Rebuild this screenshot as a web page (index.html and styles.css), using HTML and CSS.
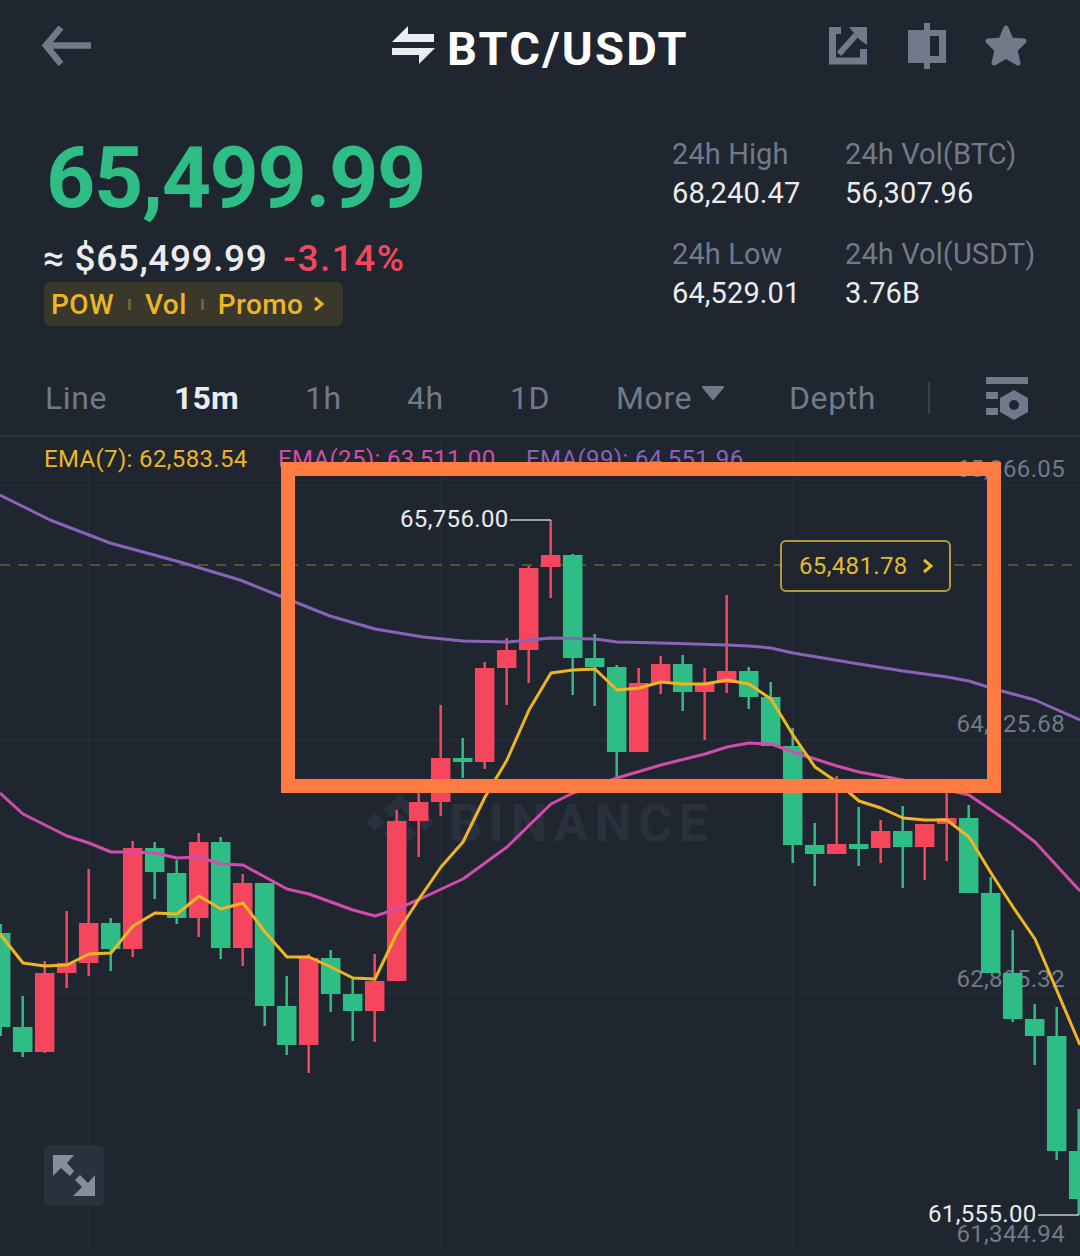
FILE: index.html
```html
<!DOCTYPE html>
<html lang="en">
<head>
<meta charset="UTF-8" />
<title>BTC/USDT</title>
<link rel="stylesheet" href="styles.css">
</head>
<body>

<!-- Top bar -->
<header class="top-bar">
  <svg class="back-icon" width="50" height="40" viewBox="0 0 50 40"><path d="M50 19.500H6M20 1.500L5 19.500L20 38" /></svg>
  <div class="pair">
    <svg class="swap-icon" width="44" height="40" viewBox="0 0 44 40"><path d="M16 0L0 16H42V8H16ZM0 22H43L27 38V29H0Z" /></svg>
    <span class="pair-name">BTC/USDT</span>
  </div>
  <div class="top-actions">
    <svg width="38" height="38" viewBox="0 0 38 38"><path class="share-box" d="M12 3.500H3.500V34H34.500V22" /><path class="share-line" d="M10 27L27 8" /><path class="icon-fill" d="M20 0H38V18L31 13L25 6Z" /></svg>
    <svg width="38" height="46" viewBox="0 0 38 46"><path class="icon-fill" fill-rule="evenodd" d="M16 0H22V7H38V40H22V46H16V40H0V7H16ZM22 13V33H31V13Z" /></svg>
    <svg class="star-icon" width="42" height="42" viewBox="0 0 42 42"><path class="star" d="M21 3L26 15L39 16L30 25L33 38L21 31L9 38L12 25L3 16L16 15Z" /></svg>
  </div>
</header>

<!-- Price summary -->
<section class="summary">
  <div class="summary-left">
    <div class="last-price">65,499.99</div>
    <div class="price-line">
      <span class="fiat-price">≈ $65,499.99</span>
      <span class="change">-3.14%</span>
    </div>
    <div class="tag-row">
      <span>POW</span><i class="tag-sep"></i>
      <span>Vol</span><i class="tag-sep"></i>
      <span>Promo</span>
      <svg width="14" height="16" viewBox="0 0 14 16"><path d="M3 2L10 8L3 14" /></svg>
    </div>
  </div>
  <div class="stats">
    <div class="stat"><span class="stat-label">24h High</span><span class="stat-value">68,240.47</span></div>
    <div class="stat"><span class="stat-label">24h Vol(BTC)</span><span class="stat-value">56,307.96</span></div>
    <div class="stat"><span class="stat-label">24h Low</span><span class="stat-value">64,529.01</span></div>
    <div class="stat"><span class="stat-label">24h Vol(USDT)</span><span class="stat-value">3.76B</span></div>
  </div>
</section>

<!-- Interval tabs -->
<nav class="tabs">
  <span>Line</span>
  <span class="active">15m</span>
  <span>1h</span>
  <span>4h</span>
  <span>1D</span>
  <span class="more">More <svg width="24" height="16" viewBox="0 0 24 16"><path d="M2 2H22L12 14Z" /></svg></span>
  <span>Depth</span>
  <i class="tab-sep"></i>
  <svg class="settings-icon" width="44" height="44" viewBox="0 0 44 44"><path fill-rule="evenodd" d="M1 1H43V8H1ZM1 16H13V23H1ZM1 32H13V39H1ZM29 14L43 22V36L29 44L15 36V22ZM29 24A5 5 0 1 0 29 34A5 5 0 1 0 29 24Z" /></svg>
</nav>

<!-- Chart -->
<main class="chart">
  <svg id="chartSvg" width="1080" height="819" viewBox="0 437 1080 819">
    <g class="grid">
      <path d="M88.700 437V1250M440.700 437V1250M792.700 437V1250M0 485H1080M0 740H1080M0 994H1080" />
    </g>
    <g class="watermark">
      <path d="M400 794L416 810L409 817L400 808L391 817L384 810ZM400 850L384 834L391 827L400 836L409 827L416 834ZM375 813L384 822L375 831L366 822ZM425 813L434 822L425 831L416 822ZM400 813L409 822L400 831L391 822Z" />
      <text x="449" y="841">BINANCE</text>
    </g>
    <g class="axis">
      <text x="1065" y="477">65,866.05</text>
      <text x="1065" y="732">64,325.68</text>
      <text x="1065" y="987">62,805.32</text>
      <text x="1065" y="1242">61,344.94</text>
    </g>
    <line class="last-line" x1="0" y1="565" x2="1080" y2="565" />
    <g id="candles"></g>
    <g id="emaLines"></g>
    <g class="ema-legend">
      <text class="ema7" x="44" y="467">EMA(7): 62,583.54</text>
      <text class="ema25" x="278" y="467">EMA(25): 63,511.00</text>
      <text class="ema99" x="526" y="467">EMA(99): 64,551.96</text>
    </g>
    <g class="extreme">
      <text x="400" y="527">65,756.00</text>
      <path d="M510 520H551" />
      <text x="928" y="1222">61,555.00</text>
      <path d="M1038 1215H1079" />
    </g>
  </svg>

  <div class="price-pill">
    <span>65,481.78</span>
    <svg width="14" height="16" viewBox="0 0 14 16"><path d="M3 2L10 8L3 14" /></svg>
  </div>

  <div class="expand-btn">
    <svg width="60" height="61" viewBox="0 0 60 61"><path d="M9 10H30L23 18L30 26L26 31L17 23L9 31ZM51 51H29L38 42L31 35L36 30L44 38L51 30Z" /></svg>
  </div>

  <!-- Highlight box drawn over the screenshot -->
  <div class="highlight"></div>
</main>

<script src="script.js"></script>
</body>
</html>
```

FILE: styles.css
```css
* {
  box-sizing: border-box;
}
html, body {
  margin: 0;
  padding: 0;
}
body {
  width: 1080px;
  height: 1256px;
  overflow: hidden;
  background-color: #1f2630;
  color: #eaecef;
  font-family: Roboto, "Liberation Sans", sans-serif;
}

/* Top bar */
.top-bar {
  display: flex;
  align-items: center;
  height: 92px;
  padding: 0 0 0 41px;
}
.back-icon path {
  fill: none;
  stroke: #707a8a;
  stroke-width: 6.500;
}
.pair {
  display: flex;
  align-items: center;
  gap: 11px;
  margin-left: 301px;
}
.swap-icon path {
  fill: #eaecef;
}
.pair-name {
  font-size: 47px;
  font-weight: 700;
  line-height: 56px;
  color: #fff;
  letter-spacing: 2.200px;
  margin-top: 6px;
}
.top-actions {
  display: flex;
  align-items: center;
  gap: 41px;
  margin-left: 140px;
}
.star-icon {
  margin-left: -2px;
}
.icon-fill {
  fill: #707a8a;
}
.share-box {
  fill: none;
  stroke: #707a8a;
  stroke-width: 7;
}
.share-line {
  fill: none;
  stroke: #707a8a;
  stroke-width: 6;
}
.star {
  fill: #707a8a;
  stroke: #707a8a;
  stroke-width: 5;
  stroke-linejoin: round;
}

/* Price summary */
.summary {
  display: flex;
  justify-content: space-between;
  height: 269px;
  padding: 39px 45px 0 45px;
}
.last-price {
  font-size: 86px;
  font-weight: 700;
  line-height: 90px;
  letter-spacing: -1.400px;
  color: #2ebd85;
  margin: 2px 0 0 1px;
}
.price-line {
  display: flex;
  gap: 16px;
  height: 46px;
  margin-top: 13px;
  font-size: 37px;
  line-height: 46px;
  letter-spacing: 0.600px;
}
.fiat-price {
  font-weight: 500;
  margin-left: -2px;
}
.change {
  color: #f6465d;
  font-weight: 500;
  letter-spacing: 1.500px;
}
.tag-row {
  display: flex;
  align-items: center;
  width: 299px;
  height: 44px;
  margin-left: -1px;
  padding-left: 7px;
  border-radius: 6px;
  background-color: #3a372b;
  color: #ecb526;
  font-size: 28px;
  font-weight: 500;
  letter-spacing: 0.400px;
}
.tag-sep {
  width: 3px;
  height: 11px;
  margin: 0 14px;
  background-color: #6e6330;
}
.tag-row svg {
  margin-left: 9px;
}
.tag-row svg path {
  fill: none;
  stroke: #ecb526;
  stroke-width: 3;
}
.stats {
  display: grid;
  grid-template-columns: 173px 190px;
  grid-auto-rows: 78px;
  row-gap: 22px;
  margin-top: 4px;
  height: 178px;
}
.stat {
  display: flex;
  flex-direction: column;
  font-size: 29px;
  line-height: 39px;
  letter-spacing: 0.100px;
  white-space: nowrap;
}
.stat-label {
  color: #707a8a;
}

/* Interval tabs */
.tabs {
  display: grid;
  grid-template-columns: 129px 131px 102px 103px 106px 173px 139px 57px auto;
  align-items: center;
  height: 76px;
  padding-left: 45px;
  border-bottom: 2px solid #2a303a;
  color: #707a8a;
  font-size: 32px;
  letter-spacing: 0.600px;
}
.tabs .active {
  color: #eaecef;
  font-weight: 700;
  letter-spacing: 0.200px;
}
.more {
  white-space: nowrap;
}
.more svg {
  vertical-align: 8px;
}
.more svg path {
  fill: #707a8a;
  stroke: #707a8a;
  stroke-width: 2;
  stroke-linejoin: round;
}
.tab-sep {
  width: 2px;
  height: 32px;
  background-color: #3a414c;
}
.settings-icon path {
  fill: #707a8a;
}

/* Chart */
.chart {
  position: relative;
  height: 819px;
}
.chart > svg {
  display: block;
}
.grid path {
  fill: none;
  stroke: #272e38;
  stroke-width: 1.500;
}
.watermark path {
  fill: #2b313c;
}
.watermark text {
  fill: #2b313c;
  font-size: 52px;
  font-weight: 700;
  letter-spacing: 6.400px;
}
.axis text {
  fill: #707a8a;
  font-size: 24px;
  letter-spacing: 0.350px;
  text-anchor: end;
}
.last-line {
  stroke: #6b6032;
  stroke-width: 1.500;
  stroke-dasharray: 10 8;
}
.ema-legend text {
  font-size: 24px;
  letter-spacing: 0.350px;
}
.ema7 {
  fill: #ecb526;
}
.ema25 {
  fill: #d24cae;
}
.ema99 {
  fill: #8a63b8;
}
.extreme text {
  fill: #eaecef;
  font-size: 24px;
  letter-spacing: 0.350px;
}
.extreme path {
  fill: none;
  stroke: #c7cbd1;
  stroke-width: 1.500;
}
.price-pill {
  position: absolute;
  left: 780px;
  top: 103px;
  display: flex;
  align-items: center;
  width: 171px;
  height: 52px;
  padding-left: 17px;
  border: 2px solid #b39a3a;
  border-radius: 6px;
  background-color: #1f2630;
  color: #e3ba2e;
  font-size: 24px;
  letter-spacing: 0.350px;
}
.price-pill svg {
  margin-left: 13px;
}
.price-pill svg path {
  fill: none;
  stroke: #e3ba2e;
  stroke-width: 3;
}
.expand-btn {
  position: absolute;
  left: 44px;
  top: 708px;
  width: 60px;
  height: 61px;
  border-radius: 6px;
  background-color: #2a313c;
}
.expand-btn svg {
  display: block;
}
.expand-btn path {
  fill: #848e9c;
}
.highlight {
  position: absolute;
  left: 281px;
  top: 25px;
  width: 720px;
  height: 331px;
  border: 14.500px solid #fe7b41;
}
```

FILE: script.js
```js
// Candles: wick top, wick bottom, body top, body bottom, colour
const UP = '#2ebd85';
const DOWN = '#f6465d';

const candles = [
  [924, 1036, 933, 1027, UP],
  [996, 1057, 1027, 1052, UP],
  [961, 1053, 973, 1052, DOWN],
  [911, 988, 963, 973, DOWN],
  [869, 976, 923, 963, DOWN],
  [918, 971, 923, 949, UP],
  [841, 957, 848, 949, DOWN],
  [842, 899, 848, 872, UP],
  [860, 924, 873, 918, UP],
  [833, 937, 842, 918, DOWN],
  [837, 959, 842, 948, UP],
  [874, 966, 883, 948, DOWN],
  [883, 1026, 883, 1006, UP],
  [976, 1055, 1006, 1045, UP],
  [954, 1073, 958, 1045, DOWN],
  [950, 1012, 958, 994, UP],
  [978, 1041, 994, 1011, UP],
  [954, 1042, 981, 1011, DOWN],
  [810, 981, 821, 981, DOWN],
  [780, 857, 802, 821, DOWN],
  [705, 816, 758, 802, DOWN],
  [738, 778, 758, 762, UP],
  [662, 769, 668, 762, DOWN],
  [638, 705, 650, 668, DOWN],
  [566, 683, 568, 650, DOWN],
  [520, 598, 555, 567, DOWN],
  [554, 695, 555, 658, UP],
  [634, 706, 658, 667, UP],
  [665, 780, 667, 752, UP],
  [668, 752, 683, 752, DOWN],
  [656, 694, 664, 683, DOWN],
  [655, 711, 664, 692, UP],
  [668, 740, 683, 692, DOWN],
  [595, 693, 671, 683, DOWN],
  [667, 709, 671, 697, UP],
  [682, 746, 697, 746, UP],
  [728, 863, 746, 845, UP],
  [823, 886, 845, 854, UP],
  [776, 854, 844, 854, DOWN],
  [807, 866, 844, 849, UP],
  [820, 863, 831, 848, DOWN],
  [806, 888, 831, 847, UP],
  [824, 880, 824, 847, DOWN],
  [780, 861, 818, 824, DOWN],
  [805, 893, 818, 893, UP],
  [877, 973, 893, 973, UP],
  [930, 1022, 973, 1019, UP],
  [1004, 1065, 1019, 1036, UP],
  [1007, 1160, 1036, 1151, UP],
  [1109, 1215, 1151, 1199, UP]
];

const ema = [
  { color: '#8a63b8', points: '0,495 50,520 110,543 180,562 240,580 290,600 330,616 375,629 423,637 463,641 507,642 551,638 595,639 617,642 661,643 727,645 749,646 771,648 793,653 859,664 903,671 947,677 969,681 991,688 1035,700 1080,720' },
  { color: '#d24cae', points: '0,793 23,814 45,825 67,836 89,843 111,852 133,852 155,853 177,858 199,857 221,864 243,865 265,877 287,889 309,894 331,902 353,910 375,916 397,909 420,899 463,879 507,847 551,804 573,793 617,778 661,765 705,754 727,747 749,743 771,744 793,752 815,759 837,766 859,772 881,776 903,780 947,790 969,795 991,810 1013,825 1035,842 1080,891' },
  { color: '#eeb622', points: '0,934 23,963 45,966 67,965 89,954 111,953 133,926 155,913 177,914 199,896 221,909 243,903 265,932 287,957 309,957 331,967 353,978 375,979 397,933 419,899 441,867 463,842 485,797 507,760 529,710 551,673 573,670 595,669 617,690 639,688 661,682 683,684 705,684 727,680 749,684 771,699 793,735 815,767 837,782 859,801 881,808 903,818 925,820 947,820 969,837 991,873 1013,907 1035,939 1080,1045' }
];

const SVG_NS = 'http://www.w3.org/2000/svg';

function addEl(parent, name, attrs) {
  const el = document.createElementNS(SVG_NS, name);
  Object.keys(attrs).forEach(key => el.setAttribute(key, attrs[key]));
  parent.appendChild(el);
}

const candleGroup = document.getElementById('candles');
candles.forEach((c, i) => {
  const x = 0.7 + i * 22;
  addEl(candleGroup, 'rect', { x: x - 1.25, y: c[0], width: 2.5, height: c[1] - c[0], fill: c[4] });
  addEl(candleGroup, 'rect', { x: x - 9.75, y: c[2], width: 19.5, height: c[3] - c[2], fill: c[4] });
});

const lineGroup = document.getElementById('emaLines');
ema.forEach(line => {
  addEl(lineGroup, 'polyline', { points: line.points, fill: 'none', stroke: line.color, 'stroke-width': 3, 'stroke-linejoin': 'round' });
});
```
